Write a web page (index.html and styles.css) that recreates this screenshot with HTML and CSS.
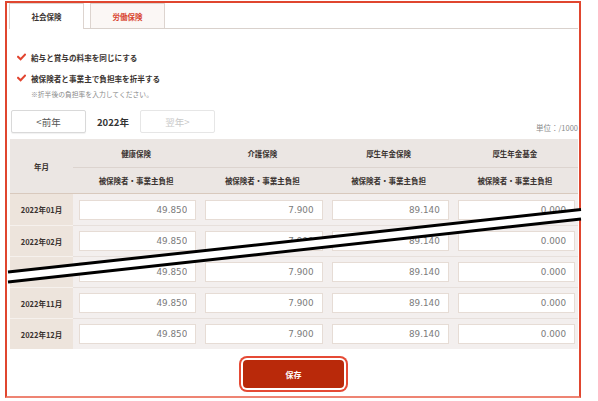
FILE: index.html
```html
<!DOCTYPE html>
<html lang="ja">
<head>
<meta charset="utf-8">
<title>保険料率設定</title>
<link rel="stylesheet" href="styles.css">
</head>
<body>
<div class="frame">
  <div class="tabs">
    <div class="tab active">社会保険</div>
    <div class="tab other">労働保険</div>
  </div>

  <div class="options">
    <div class="opt"><svg class="check" viewBox="0 0 9 8" width="9" height="8"><path d="M1 3.8 L3.6 6.3 L8 1.6" fill="none" stroke="#e2442f" stroke-width="2" stroke-linecap="square"/></svg>給与と賞与の料率を同じにする</div>
    <div class="opt"><svg class="check" viewBox="0 0 9 8" width="9" height="8"><path d="M1 3.8 L3.6 6.3 L8 1.6" fill="none" stroke="#e2442f" stroke-width="2" stroke-linecap="square"/></svg>被保険者と事業主で負担率を折半する</div>
    <p class="note">※折半後の負担率を入力してください。</p>
  </div>

  <div class="nav">
    <div class="years">
      <button class="ybtn">&lt;前年</button>
      <span class="cur">2022年</span>
      <button class="ybtn disabled">翌年&gt;</button>
    </div>
    <span class="unit">単位：/1000</span>
  </div>

  <table class="rates">
    <colgroup><col class="c-month"><col><col><col><col></colgroup>
    <thead>
      <tr class="h1">
        <th rowspan="2" class="month-h">年月</th>
        <th>健康保険</th>
        <th>介護保険</th>
        <th>厚生年金保険</th>
        <th>厚生年金基金</th>
      </tr>
      <tr class="h2">
        <th>被保険者・事業主負担</th>
        <th>被保険者・事業主負担</th>
        <th>被保険者・事業主負担</th>
        <th>被保険者・事業主負担</th>
      </tr>
    </thead>
    <tbody>
      <tr><td class="month">2022年01月</td><td><input value="49.850"></td><td><input value="7.900"></td><td><input value="89.140"></td><td><input value="0.000"></td></tr>
      <tr><td class="month">2022年02月</td><td><input value="49.850"></td><td><input value="7.900"></td><td><input value="89.140"></td><td><input value="0.000"></td></tr>
      <tr><td class="month">2022年10月</td><td><input value="49.850"></td><td><input value="7.900"></td><td><input value="89.140"></td><td><input value="0.000"></td></tr>
      <tr><td class="month">2022年11月</td><td><input value="49.850"></td><td><input value="7.900"></td><td><input value="89.140"></td><td><input value="0.000"></td></tr>
      <tr><td class="month">2022年12月</td><td><input value="49.850"></td><td><input value="7.900"></td><td><input value="89.140"></td><td><input value="0.000"></td></tr>
    </tbody>
  </table>

  <div class="actions">
    <button class="save">保存</button>
  </div>
</div>

<svg class="cut" viewBox="0 0 598 401" width="598" height="401">
  <polygon points="8,272 581,209.5 581,219 8,282" fill="#fff"/>
  <line x1="8" y1="272" x2="581" y2="209.5" stroke="#000" stroke-width="3"/>
  <line x1="8" y1="282" x2="581" y2="219" stroke="#000" stroke-width="3"/>
</svg>
</body>
</html>
```

FILE: styles.css
```css
html, body {
  margin: 0;
  padding: 0;
}
body {
  width: 598px;
  height: 401px;
  position: relative;
  overflow: hidden;
  background: #fff;
  color: #333;
  font-family: "Noto Sans CJK JP", "Noto Sans", sans-serif;
}

.frame {
  margin: 1px 0 0 5px;
  width: 576px;
  height: 397px;
  box-sizing: border-box;
  border: 2px solid #e0462f;
  border-bottom-color: #ee8473;
  padding: 0 1px 0 2px;
  display: flex;
  flex-direction: column;
}

/* tabs */
.tabs {
  display: flex;
  gap: 6px;
  height: 26px;
  box-sizing: border-box;
  border-bottom: 1px solid #d9d1cc;
}
.tab {
  width: 75px;
  height: 25px;
  box-sizing: border-box;
  display: flex;
  align-items: center;
  justify-content: center;
  font-size: 7.5px;
  font-weight: bold;
  border: 1px solid #ddd4cf;
  border-bottom: none;
}
.tab.active {
  height: 26px;
  margin-bottom: -1px;
  background: #fff;
  color: #3a3330;
}
.tab.other {
  background: #fbf7f5;
  color: #d8452f;
}

/* options */
.options {
  margin: 21px 0 0 8px;
}
.opt {
  display: flex;
  align-items: center;
  gap: 5px;
  height: 14px;
  font-size: 7.6px;
  font-weight: bold;
  color: #3a3330;
}
.opt + .opt {
  margin-top: 7px;
}
.check {
  display: block;
  flex: none;
}
.note {
  margin: 4px 0 0 14px;
  font-size: 6.8px;
  line-height: 10px;
  color: #8a8a8a;
}

/* year navigation */
.nav {
  display: flex;
  justify-content: space-between;
  align-items: flex-end;
  margin-top: 11px;
  padding-left: 2px;
}
.years {
  display: flex;
  align-items: center;
}
.ybtn {
  width: 75px;
  height: 23px;
  box-sizing: border-box;
  padding: 0;
  background: #fff;
  border: 1px solid #d9d9d9;
  border-radius: 2px;
  box-shadow: 0 1px 1px rgba(0, 0, 0, 0.06);
  font-family: "Noto Sans CJK JP", "Noto Sans", sans-serif;
  font-size: 9.5px;
  color: #555;
}
.ybtn.disabled {
  color: #c9c9c9;
  border-color: #e6e6e6;
  box-shadow: none;
}
.cur {
  margin: 0 11px;
  font-size: 9.5px;
  font-weight: bold;
  color: #333;
}
.unit {
  font-size: 7.5px;
  line-height: 10px;
  color: #8a8a8a;
}

/* table */
.rates {
  margin: 6px 0 0 1px;
  width: 568px;
  table-layout: fixed;
  border-collapse: separate;
  border-spacing: 0;
}
.c-month {
  width: 63px;
}
.rates th {
  background: #ebe6e3;
  font-size: 7.5px;
  font-weight: bold;
  color: #3a3330;
  text-align: center;
  padding: 0;
}
.h1 {
  height: 28px;
}
.h2 {
  height: 27px;
}
.h2 th {
  border-top: 1px solid #dcd4cf;
  border-bottom: 1px solid #d8c9bd;
}
.month-h {
  border-bottom: 1px solid #d8c9bd;
}
.rates tbody tr {
  height: 31px;
}
.rates td {
  background: #f3efee;
  padding: 0 3px 0 6px;
  vertical-align: middle;
}
.rates tbody tr + tr td {
  border-top: 1px solid #e7e0dc;
}
.rates td.month {
  background: #ede4dc;
  padding: 0;
  text-align: center;
  font-size: 7.5px;
  font-weight: bold;
  color: #3a3330;
}
.rates tbody tr + tr td.month {
  border-top-color: #f6f1ed;
}
.rates input {
  display: block;
  width: 100%;
  height: 20px;
  box-sizing: border-box;
  margin: 0;
  padding: 0 8px 0 0;
  border: 1px solid #e6dcd5;
  background: #fff;
  text-align: right;
  font-family: "DejaVu Sans", Verdana, sans-serif;
  font-size: 8.8px;
  color: #7b7b7b;
  outline: none;
}

/* actions */
.actions {
  display: flex;
  justify-content: center;
  margin-top: 11px;
}
.save {
  width: 101px;
  height: 28px;
  padding: 0;
  border: none;
  border-radius: 4px;
  background: #b9290a;
  color: #fff;
  font-family: "Noto Sans CJK JP", "Noto Sans", sans-serif;
  font-size: 8px;
  font-weight: bold;
  box-shadow: 0 0 0 2px #fff, 0 0 0 4px #e54a35;
}

/* break marker overlay */
.cut {
  position: absolute;
  left: 0;
  top: 0;
  pointer-events: none;
}
```
